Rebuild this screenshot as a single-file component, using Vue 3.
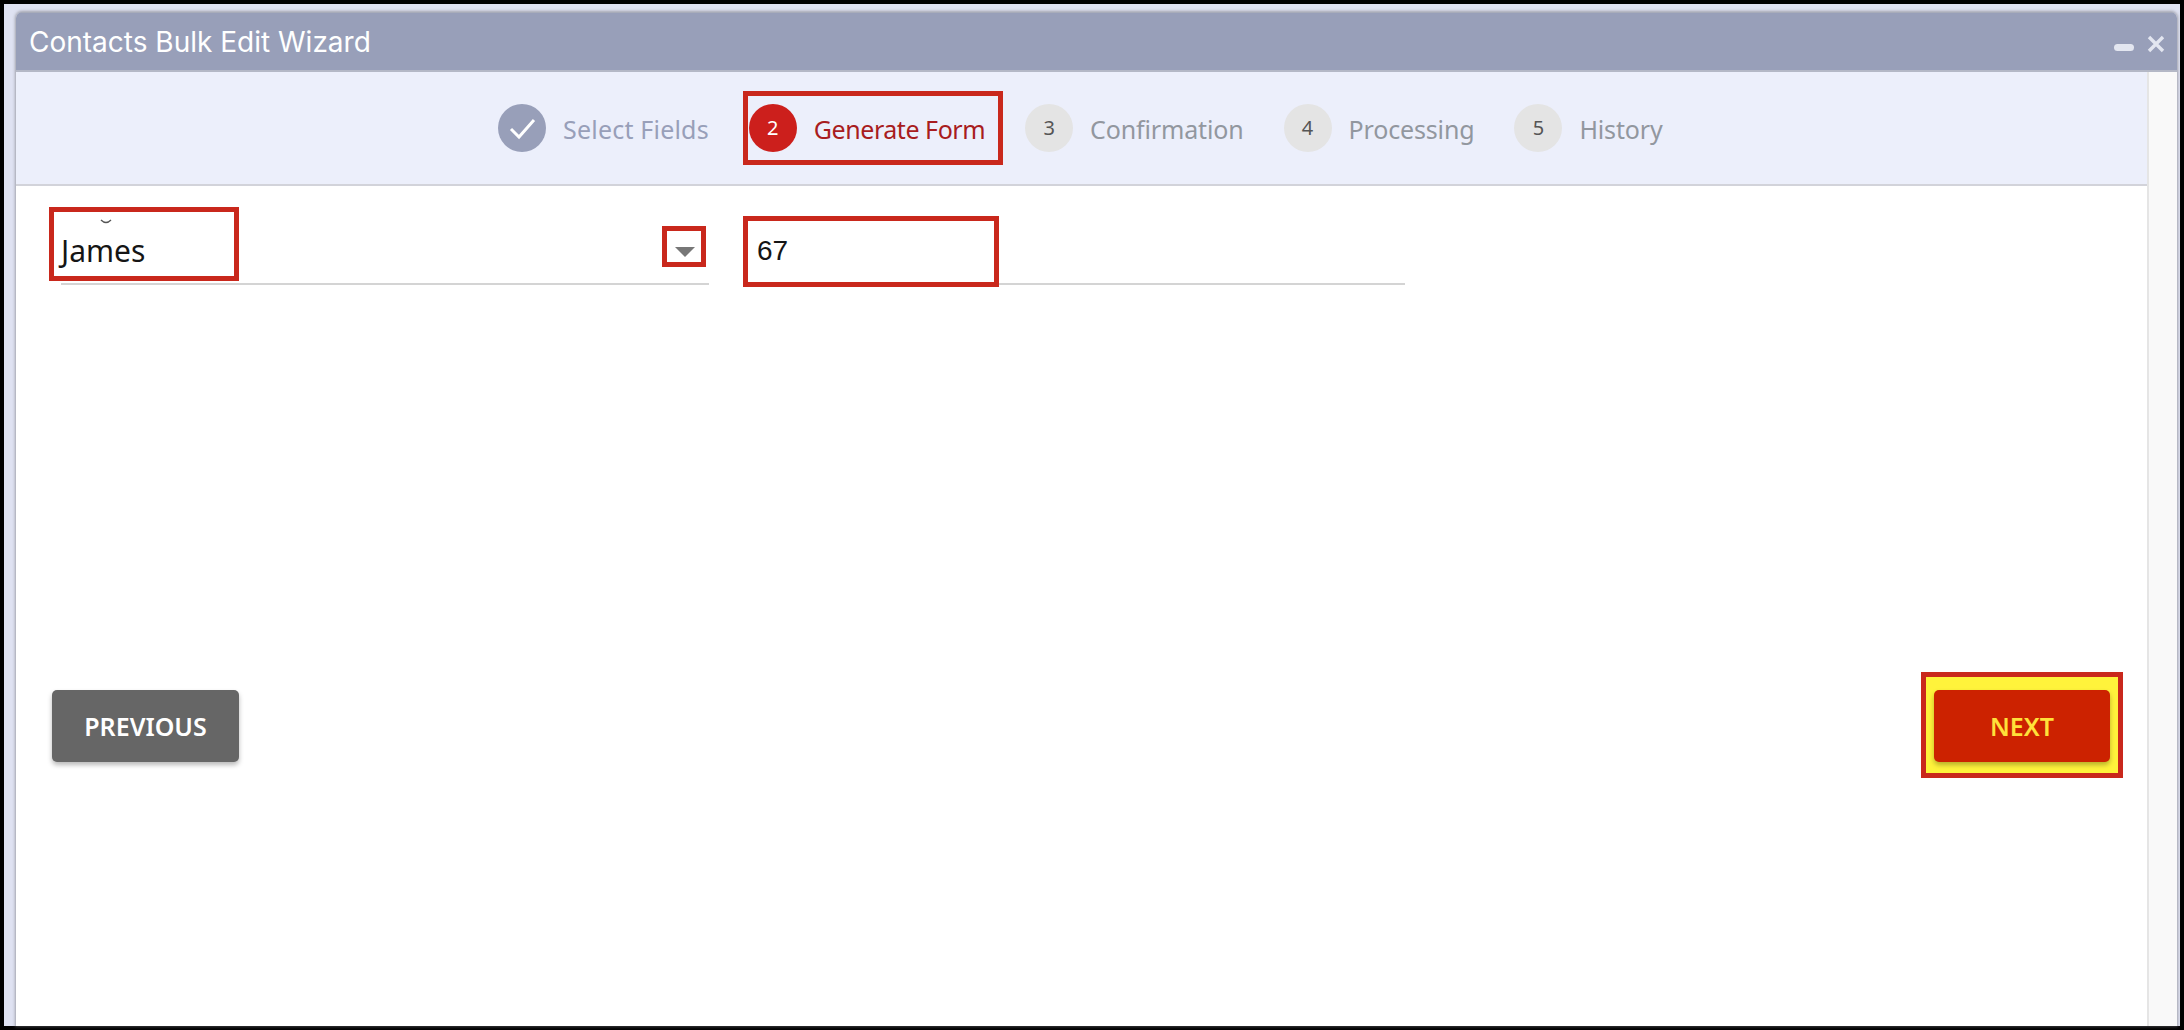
<script setup>
const steps = [
  { n: '1', label: 'Select Fields', state: 'done' },
  { n: '2', label: 'Generate Form', state: 'active' },
  { n: '3', label: 'Confirmation', state: 'todo' },
  { n: '4', label: 'Processing', state: 'todo' },
  { n: '5', label: 'History', state: 'todo' }
]
</script>

<template>
  <div class="screen">
    <div class="frame">
      <section class="window">
        <header class="titlebar">
          <h1 class="title">Contacts Bulk Edit Wizard</h1>
          <div class="controls">
            <span class="minimize"></span>
            <svg class="close" viewBox="0 0 18 18" width="18" height="18" aria-hidden="true">
              <path d="M2 2 L16 16 M16 2 L2 16" stroke="#e3e6f0" stroke-width="3.4" fill="none" />
            </svg>
          </div>
        </header>
        <div class="body">
          <main class="content">
            <nav class="stepper">
              <div v-for="s in steps" :key="s.n" class="step" :class="s.state">
                <span class="circle">
                  <svg v-if="s.state === 'done'" viewBox="0 0 48 48" width="48" height="48" aria-hidden="true">
                    <path d="M13 25 L21 33 L36 16" stroke="#fff" stroke-width="3" fill="none" />
                  </svg>
                  <template v-else>{{ s.n }}</template>
                </span>
                <span class="label">{{ s.label }}</span>
                <span v-if="s.state === 'active'" class="mark mark-step"></span>
              </div>
            </nav>
            <div class="form">
              <div class="field">
                <svg class="clipped-label" viewBox="0 0 12 5" width="12" height="5" aria-hidden="true">
                  <path d="M1 1 Q6 6 11 1" stroke="#555" stroke-width="1.4" fill="none" />
                </svg>
                <span class="value">James</span>
                <span class="arrow"></span>
                <span class="mark mark-name"></span>
                <span class="mark mark-arrow"></span>
              </div>
              <div class="field">
                <span class="value number">67</span>
                <span class="mark mark-number"></span>
              </div>
            </div>
            <div class="actions">
              <button class="btn prev" type="button">PREVIOUS</button>
              <div class="next-wrap">
                <span class="mark mark-next"></span>
                <button class="btn next" type="button">NEXT</button>
              </div>
            </div>
          </main>
          <aside class="scrolltrack"></aside>
        </div>
      </section>
    </div>
  </div>
</template>

<style>
html, body { margin: 0; background: #000; }
</style>

<style scoped>
.screen {
  width: 2184px;
  height: 1030px;
  overflow: hidden;
}
.frame {
  height: 100%;
  box-sizing: border-box;
  border: 4px solid #000;
  padding: 8px 3px 0 12px;
  background: #dfe2f2;
}
.window {
  height: 100%;
  display: flex;
  flex-direction: column;
  background: #fff;
  border-top-left-radius: 6px;
  border-top-right-radius: 6px;
  box-shadow: 0 0 3px 1px rgba(110, 110, 115, .55);
  overflow: hidden;
}
.titlebar {
  height: 60px;
  flex: none;
  box-sizing: border-box;
  display: flex;
  align-items: center;
  justify-content: space-between;
  padding: 0 12px 0 13px;
  background: #989fb9;
  border-bottom: 2px solid #b4b8c6;
  border-top: 1px solid #a8acba;
}
.title {
  margin: 0;
  font: 400 28px/1 Inter, "Liberation Sans", sans-serif;
  color: #fff;
}
.controls {
  display: flex;
  align-items: center;
  gap: 13px;
  margin-top: 4px;
}
.minimize {
  width: 20px;
  height: 7px;
  border-radius: 4px;
  background: #e3e6f0;
  margin-top: 7px;
}
.body {
  flex: 1;
  min-height: 0;
  display: flex;
}
.content {
  flex: 1;
  min-width: 0;
  display: flex;
  flex-direction: column;
}
.scrolltrack {
  width: 30px;
  flex: none;
  box-sizing: border-box;
  background: #f9f9f9;
  border-left: 2px solid #e5e5e5;
}
.stepper {
  height: 114px;
  flex: none;
  box-sizing: border-box;
  display: flex;
  align-items: center;
  padding: 0 0 0 482px;
  background: #eceffb;
  border-bottom: 2px solid #d2d3da;
}
.step {
  position: relative;
  display: flex;
  align-items: center;
  gap: 17px;
  margin-right: 40px;
}
.step.done { margin-right: 40px; }
.circle {
  width: 48px;
  height: 48px;
  flex: none;
  border-radius: 50%;
  display: flex;
  align-items: center;
  justify-content: center;
  background: #e4e4e4;
  color: #555;
  font: 400 20px/1 "Noto Sans", sans-serif;
}
.label {
  margin-top: 2px;
  font: 400 25px/1 "Noto Sans", sans-serif;
  color: #92979f;
  letter-spacing: -.15px;
  white-space: nowrap;
}
.done .circle { background: #989fb9; }
.done .label { color: #989fb9; letter-spacing: .2px; }
.active .circle { background: #cc1f1c; color: #fff; }
.active .label { color: #a81c20; letter-spacing: -.45px; }
.mark {
  position: absolute;
  box-sizing: border-box;
  border: 5px solid #c9281c;
  pointer-events: none;
}
.mark-step { left: -6px; top: -13px; width: 260px; height: 74px; }
.form {
  display: grid;
  grid-template-columns: 648px 662px;
  gap: 34px;
  padding: 0 0 0 45px;
  flex: none;
}
.field {
  position: relative;
  height: 99px;
  box-sizing: border-box;
  border-bottom: 2px solid #d4d4d4;
}
.clipped-label {
  position: absolute;
  left: 39px;
  top: 33px;
}
.value {
  position: absolute;
  left: 0;
  top: 47px;
  font: 400 30px/36px "Noto Sans", sans-serif;
  color: #151515;
}
.number { left: 14px; font: 400 28px/36px "Liberation Sans", sans-serif; }
.arrow {
  position: absolute;
  left: 614px;
  top: 61px;
  width: 0;
  height: 0;
  border-left: 10px solid transparent;
  border-right: 10px solid transparent;
  border-top: 10px solid #777;
}
.mark-name { left: -12px; top: 21px; width: 190px; height: 74px; }
.mark-arrow { left: 601px; top: 40px; width: 44px; height: 41px; }
.mark-number { left: 0; top: 30px; width: 256px; height: 71px; }
.actions {
  display: flex;
  justify-content: space-between;
  padding: 405px 37px 0 36px;
}
.btn {
  height: 72px;
  border: none;
  border-radius: 5px;
  font: 600 25px/1 "Noto Sans", sans-serif;
  box-shadow: 0 3px 5px rgba(0, 0, 0, .28);
  padding: 0;
}
.prev { width: 187px; background: #666; color: #fff; }
.next-wrap { position: relative; display: flex; }
.mark-next {
  left: -13px;
  top: -18px;
  width: 202px;
  height: 106px;
  background: #fff33b;
}
.next {
  position: relative;
  width: 176px;
  background: #cc2200;
  color: #ffe13a;
}
</style>
